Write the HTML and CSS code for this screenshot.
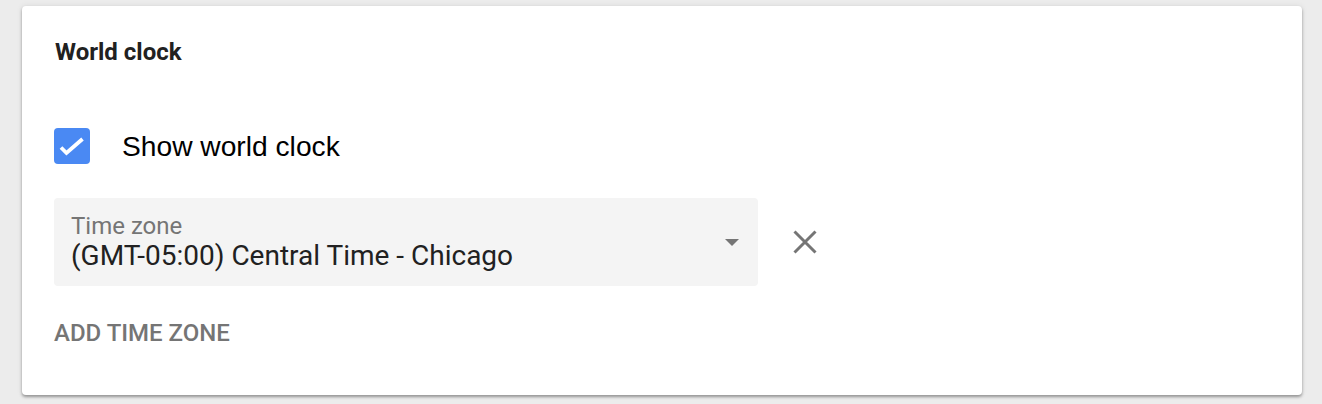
FILE: index.html
```html
<!DOCTYPE html>
<html>
<head>
<meta charset="utf-8">
<link rel="stylesheet" href="styles.css">
</head>
<body>
<section class="card">
  <h2 class="title">World clock</h2>
  <label class="check-row">
    <span class="checkbox">
      <svg width="36" height="36" viewBox="0 0 36 36"><path d="M7 19.5 L12.5 25 L28.5 11" fill="none" stroke="#fff" stroke-width="3.8"/></svg>
    </span>
    <span class="check-label">Show world clock</span>
  </label>
  <div class="tz-row">
    <div class="field">
      <div class="field-text">
        <div class="field-label">Time zone</div>
        <div class="field-value">(GMT-05:00) Central Time - Chicago</div>
      </div>
      <svg class="arrow" width="14" height="7" viewBox="0 0 14 7"><path d="M0 0 L14 0 L7 7 Z" fill="#757575"/></svg>
    </div>
    <svg class="close" width="24" height="24" viewBox="0 0 24 24"><path d="M1.5 1.5 L22.5 22.5 M22.5 1.5 L1.5 22.5" stroke="#757575" stroke-width="3"/></svg>
  </div>
  <div class="add">ADD TIME ZONE</div>
</section>
</body>
</html>
```
FILE: styles.css
```css
html, body {
  margin: 0;
  padding: 0;
}
body {
  background: #ececec;
  padding: 6px 20px 9px 22px;
  font-family: Roboto, "Liberation Sans", sans-serif;
}
.card {
  box-sizing: border-box;
  width: 1280px;
  height: 389px;
  background: #fff;
  border-radius: 4px;
  box-shadow: 0 2px 3px rgba(0,0,0,0.35), 0 0 6px rgba(0,0,0,0.08);
  padding: 32px 0 0 32px;
}
.title {
  margin: 0;
  font-size: 24px;
  line-height: 28px;
  font-weight: 700;
  color: #212121;
  padding-left: 1px;
}
.check-row {
  display: flex;
  align-items: center;
  margin-top: 62px;
  height: 36px;
}
.checkbox {
  width: 36px;
  height: 36px;
  border-radius: 4px;
  background: #4a89f3;
  display: block;
}
.checkbox svg { display: block; }
.check-label {
  margin-left: 32px;
  font-family: "Liberation Sans", Arial, sans-serif;
  font-size: 28.2px;
  line-height: 36px;
  color: #000;
}
.tz-row {
  display: flex;
  align-items: center;
  margin-top: 34px;
}
.field {
  box-sizing: border-box;
  width: 704px;
  height: 88px;
  background: #f4f4f4;
  border-radius: 4px;
  display: flex;
  align-items: center;
  padding: 0 19px 0 17px;
}
.field-text {
  flex: 1;
}
.field-label {
  font-size: 24px;
  line-height: 28px;
  color: #757575;
}
.field-value {
  font-size: 28px;
  line-height: 32px;
  color: #212121;
}
.arrow { display: block; }
.close {
  display: block;
  margin-left: 35px;
}
.add {
  margin-top: 33px;
  font-size: 24px;
  line-height: 28px;
  font-weight: 500;
  color: #757575;
}
```
